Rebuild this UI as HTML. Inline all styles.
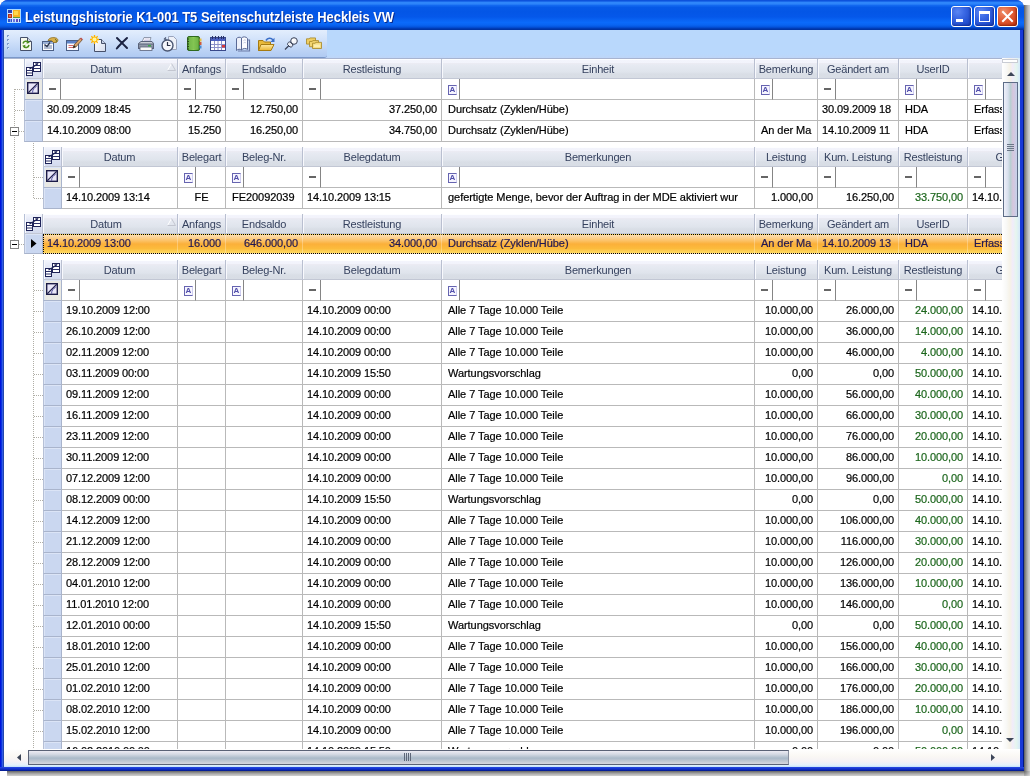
<!DOCTYPE html>
<html><head><meta charset="utf-8"><title>Leistungshistorie</title>
<style>
*{box-sizing:border-box;margin:0;padding:0}
html,body{width:1030px;height:776px;overflow:hidden;background:#fff}
body{font-family:"Liberation Sans",sans-serif;font-size:11px;color:#000;position:relative;will-change:transform}
.abs{position:absolute}
#shadowR{left:1024px;top:5px;width:6px;height:771px;background:linear-gradient(to right,#5c5c5c 0,#868686 25%,#a9a9a9 50%,#c4c4c4 75%,#d6d6d6 100%)}
#shadowB{left:7px;top:771px;width:1017px;height:5px;background:linear-gradient(to bottom,#666 0,#8c8c8c 30%,#b0b0b0 60%,#d0d0d0 100%)}
#shadowC{left:1024px;top:771px;width:6px;height:5px;background:radial-gradient(circle at 0 0,#666 0,#999 40%,#c8c8c8 80%,#dadada 100%)}
#botb{left:0;top:767px;width:1024px;height:4px;background:linear-gradient(to bottom,#2a4be0 0,#1838d8 30%,#0c28b8 70%,#001880 100%)}
#win{left:0;top:0;width:1024px;height:771px;background:linear-gradient(to right,#0014dc 0,#0014dc 1px,#0a34e0 1px,#0a34e0 2px,#3359e3 2px,#3359e3 3px,#2349ae 3px,#2349ae 4px,#1a3ad6 4px,#1a3ad6 1020px,#1838d8 1020px,#1838d8 1023px,#001880 1023px);border-radius:8px 8px 0 0;overflow:hidden}
#title{left:0;top:0;width:1024px;height:30px;background:linear-gradient(to bottom,#0a4bd6 0,#1059e2 1px,#2f86fa 2.5px,#2d84fa 4px,#1268f0 5.5px,#0659e7 7.5px,#0456e6 12px,#0558ea 17px,#0963f3 20px,#0b6afa 22.5px,#0964f2 25px,#0453dc 27px,#003cb6 28.5px,#002e9a 30px)}
#ttext{left:25px;top:9px;font-weight:bold;font-size:14.5px;line-height:16px;color:#fff;white-space:nowrap;text-shadow:1px 1px 0 #0a2a8c;transform:scaleX(0.891);transform-origin:0 0}
.wb{width:21px;height:21px;border:1px solid #fff;border-radius:3px;background:radial-gradient(circle at 30% 25%,#5b86f3 0,#3a68e4 35%,#2450cf 70%,#1a3fb8 100%);box-shadow:inset -1px -1px 2px rgba(10,30,120,.6)}
.wbx{background:radial-gradient(circle at 30% 25%,#f0906c 0,#e2603a 40%,#cf431c 75%,#b0300f 100%);box-shadow:inset -1px -1px 2px rgba(110,20,0,.6)}
#client{left:4px;top:30px;width:1016px;height:737px;background:#fff;overflow:hidden}
#tbar{left:0;top:0;width:1016px;height:28px;background:linear-gradient(to bottom,#b9d8fc 0,#b9d8fc 24px,#bed5f7 28px)}
#tstrip{left:0;top:0;width:323px;height:28px;background:linear-gradient(to bottom,#e3eefd 0,#d0e1fa 40%,#bcd3f5 75%,#b0caf2 100%);border-bottom:1px solid #7b98c9;border-radius:0 0 3px 0}
.cell{-webkit-text-stroke:0.2px currentColor;position:absolute;white-space:nowrap;overflow:hidden;border-right:1px solid #b9b9b9;border-bottom:1px solid #b9b9b9;background:#fff;padding:0 4px 0 4px;line-height:20px}
.t{padding-left:6px;letter-spacing:-0.05px}
.t1{padding-left:4px}
.ls{letter-spacing:-0.11px}
.hd{letter-spacing:-0.18px;position:absolute;white-space:nowrap;overflow:hidden;text-align:center;color:#35415e;line-height:21px;border-right:1px solid #b9bfd0;border-bottom:1px solid #c2c7d4;background:linear-gradient(to bottom,#fdfeff 0,#fdfeff 1px,#f3f4fc 1px,#f2f3fb 4px,#ebebf3 4.5px,#e7eaf2 6px,#dfe4ec 13px,#d9dee6 15px,#d8dde5 19px);box-shadow:inset 1px 0 0 #f8f9fd}
.rs{position:absolute;background:#cad7f0;border-left:1px solid #b6c0d6;border-right:1px solid #a9b4cc;border-bottom:1px solid #a9b4cc;box-shadow:inset 1px 1px 0 #dbe4f6}
.hds{background:linear-gradient(to bottom,#f4f6fd 0,#e6eaf7 30%,#d3daee 100%)!important;border-left:1px solid #b6c0d6}
.r{text-align:right}
.c{text-align:center}
.g{color:#1c661c}
.fop{position:absolute;background:#fff;border-right:1px solid #858585;border-bottom:1px solid #b9b9b9}
.fin{position:absolute;background:#fff;border-right:1px solid #b9b9b9;border-bottom:1px solid #b9b9b9}
.dash{position:absolute;left:6px;top:9px;width:7px;height:2px;background:#666}
.abox{position:absolute;left:6px;top:6px;width:9px;height:10px;border:1px solid #6664b0;border-right-color:#cfcef0;background:#f6f5ff;color:#504eaa;font-size:8px;line-height:8px;text-align:center;font-weight:bold;overflow:hidden}
.sel{background:transparent!important;border-color:transparent!important;border-right-color:rgba(255,255,255,.28)!important;color:#221850;z-index:3}
#selbg{position:absolute;z-index:2;border:1px dotted #000;background:linear-gradient(to bottom,#fcdfb4 0,#fcc877 25%,#fbb03a 50%,#fcbb3c 75%,#fdda62 100%)}
.dotv{position:absolute;width:1px;background-image:linear-gradient(to bottom,#b0aea6 50%,transparent 50%);background-size:1px 2px}
.doth{position:absolute;height:1px;background-image:linear-gradient(to right,#b0aea6 50%,transparent 50%);background-size:2px 1px}
.pm{position:absolute;width:9px;height:9px;border:1px solid #848484;background:#fff}
.pm i{position:absolute;left:1px;top:3px;width:5px;height:1px;background:#000}
</style></head>
<body>
<div class="abs" id="shadowR"></div><div class="abs" id="shadowB"></div><div class="abs" id="shadowC"></div>
<div class="abs" id="win">
<div class="abs" id="title"></div>
<svg class="abs" style="left:7px;top:9px" width="14" height="14" viewBox="0 0 14 14"><rect x="0" y="0" width="14" height="14" fill="#a9d8ff"/><rect x="1" y="1" width="12" height="12" fill="#dbe9ff"/><rect x="1" y="1" width="4" height="3" fill="#2a3fb0"/><rect x="1" y="5" width="4" height="4" fill="#b0301a"/><rect x="2" y="6" width="2" height="2" fill="#e07048"/><rect x="1" y="10" width="2" height="3" fill="#2a4fd0"/><rect x="3.5" y="10" width="1.5" height="3" fill="#2a4fd0"/><rect x="6" y="1" width="7" height="7" fill="#f7b322"/><rect x="7" y="2" width="4" height="4" fill="#ffd84a"/><rect x="6" y="8" width="7" height="1" fill="#5a9a3a"/><rect x="6" y="10" width="2" height="3" fill="#6a7ae0"/><rect x="9" y="10" width="2" height="3" fill="#5a4ac0"/><rect x="12" y="10" width="1" height="3" fill="#2a3fb0"/></svg>
<div class="abs" id="ttext">Leistungshistorie K1-001 T5 Seitenschutzleiste Heckleis VW</div>
<div class="abs wb" style="left:951px;top:6px"><span class="abs" style="left:4px;top:12px;width:7px;height:3px;background:#fff"></span></div>
<div class="abs wb" style="left:974px;top:6px"><span class="abs" style="left:4px;top:4px;width:11px;height:11px;border:1px solid #fff;border-top-width:3px"></span></div>
<div class="abs wb wbx" style="left:997px;top:6px"><svg class="abs" style="left:0;top:0" width="19" height="19" viewBox="0 0 19 19"><path d="M5 5 L14 14 M14 5 L5 14" stroke="#fff" stroke-width="2" stroke-linecap="square" fill="none"/></svg></div>
<div class="abs" id="client">
<div class="abs" id="tbar"><div class="abs" id="tstrip"></div><svg class="abs" style="left:0;top:0" width="330" height="28" viewBox="0 0 330 28">
<defs>
<linearGradient id="gFold" x1="0" y1="0" x2="0" y2="1"><stop offset="0" stop-color="#ffe9a0"/><stop offset="1" stop-color="#e9b534"/></linearGradient>
<linearGradient id="gGreen" x1="0" y1="0" x2="1" y2="0"><stop offset="0" stop-color="#5aa03a"/><stop offset=".5" stop-color="#8fce5a"/><stop offset="1" stop-color="#4f9430"/></linearGradient>
<linearGradient id="gPage" x1="0" y1="0" x2="1" y2="1"><stop offset="0" stop-color="#ffffff"/><stop offset="1" stop-color="#d5dcee"/></linearGradient>
</defs>
<!-- grip -->
<g fill="#7f9acb"><rect x="3" y="5" width="2" height="2"/><rect x="3" y="9" width="2" height="2"/><rect x="3" y="13" width="2" height="2"/><rect x="3" y="17" width="2" height="2"/></g>
<g fill="#fff" opacity=".8"><rect x="4" y="6" width="1" height="1"/><rect x="4" y="10" width="1" height="1"/><rect x="4" y="14" width="1" height="1"/><rect x="4" y="18" width="1" height="1"/></g>
<!-- 1 refresh doc -->
<g transform="translate(16,7)"><path d="M.5 .5H7.5L11.5 4.5V13.5H.5Z" fill="#f7f9ee" stroke="#46506a"/><path d="M7.5 .5V4.5H11.5" fill="#cfd6e2" stroke="#46506a"/><path d="M3 6.5A3 3 0 0 1 8.2 5.3" fill="none" stroke="#4f8f1f" stroke-width="1.5"/><path d="M9 8A3 3 0 0 1 3.6 9.2" fill="none" stroke="#4f8f1f" stroke-width="1.5"/><path d="M7 3.5L9.8 5.8L6.6 6.8Z" fill="#4f8f1f"/><path d="M5 11L2.2 8.8L5.4 7.8Z" fill="#4f8f1f"/></g>
<!-- 2 form with hand -->
<g transform="translate(38,7)"><rect x=".5" y="4.500" width="11" height="9" fill="#fdfdfd" stroke="#4b5f86"/><rect x="1" y="5" width="10" height="2" fill="#9db3d8"/><path d="M2 9H10M2 11H10" stroke="#6a7fa8"/><path d="M2.500 7.500L5 9.500L8 5.500" fill="none" stroke="#2b3550" stroke-width="1.300"/><path d="M6 3.500C7 .8 11 -.2 14.500 1.200C16.500 2.200 16 4.500 14.500 5.500L11.500 5.500L9.500 3.500Z" fill="#d9b04a" stroke="#8a6a1c" stroke-width=".8"/><path d="M13 2.500c1.500 0 2 1.500 1 2.500" fill="none" stroke="#5a6a2a"/></g>
<!-- 3 edit form with pencil -->
<g transform="translate(62,7)"><rect x=".5" y="3.500" width="12" height="10" fill="#fbfbfe" stroke="#4b5f86"/><rect x="1" y="4" width="11" height="2.500" fill="#5d83c8"/><path d="M2.500 8.500H7M2.500 10.500H7" stroke="#d86a6a" stroke-width="1.200"/><path d="M7 11L8 8L14.500 1L16.300 2.800L9.800 10Z" fill="#d8a46a" stroke="#6a4a2a" stroke-width=".8"/><path d="M7 11L8 8L9.800 10Z" fill="#2a2a2a"/><path d="M14.500 1L16.300 2.800" stroke="#c05050" stroke-width="1.500"/></g>
<!-- 4 new doc with star -->
<g transform="translate(86,5)"><path d="M4.500 4.500H11.500L15.500 8.500V16.500H4.500Z" fill="url(#gPage)" stroke="#46506a"/><path d="M11.500 4.500V8.500H15.500" fill="#c8d2e8" stroke="#46506a"/><circle cx="4.500" cy="4.500" r="3" fill="#ffd42a"/><path d="M4.500 0V9M0 4.500H9M1.300 1.300L7.700 7.700M7.700 1.300L1.300 7.700" stroke="#ffb400" stroke-width="1.300"/><circle cx="4.500" cy="4.500" r="2" fill="#fff3a0"/></g>
<!-- 5 delete X -->
<g transform="translate(112,7)"><path d="M1 1C3.500 3.500 8 8 11 11M11 1C8 4 3.500 8 .8 11.500" fill="none" stroke="#1c2342" stroke-width="2" stroke-linecap="round"/></g>
<!-- 6 printer -->
<g transform="translate(134,7)"><path d="M4 5L6 .5H13L11.500 5Z" fill="#fdfdfd" stroke="#7a8498" stroke-width=".8"/><path d="M6.500 2H11.500M6 3.500H11" stroke="#b8b0d8" stroke-width=".7"/><path d="M.5 6.500L3 4.500H14L15.500 6.500V11.500H.5Z" fill="#c9ced8" stroke="#59627a"/><rect x=".5" y="7" width="15" height="4.500" fill="#8f97a8" stroke="#59627a"/><rect x="2" y="10" width="12" height="3.500" fill="#fafafa" stroke="#59627a" stroke-width=".8"/><rect x="10" y="8" width="3" height="1.500" fill="#3fa84a"/></g>
<!-- 7 clock with page -->
<g transform="translate(157,6)"><path d="M7.500 .5H12.500L15.500 3.500V13.500H7.500Z" fill="#eef1f8" stroke="#9aa4bc"/><circle cx="6.500" cy="9.500" r="5.500" fill="#f4f6fb" stroke="#4a5672" stroke-width="1.400"/><path d="M6.500 6V9.500H9.500" fill="none" stroke="#2a3248" stroke-width="1.200"/><path d="M3 3.500L5 1.500M4 2.500L5.500 4" stroke="#4a5672" stroke-width="1.200"/></g>
<!-- 8 green notebook -->
<g transform="translate(182,6)"><rect x="1.500" y=".5" width="12" height="14" rx="1.500" fill="url(#gGreen)" stroke="#2f6a1e"/><rect x="3" y="2" width="9" height="11" fill="#7cc04e" opacity=".6"/><path d="M1 3H3M1 5.500H3M1 8H3M1 10.500H3M1 13H3" stroke="#2a4a1a" stroke-width="1"/><rect x="13.500" y="2.500" width="2" height="3" fill="#e8c040"/><rect x="13.500" y="6" width="2" height="3" fill="#d05a3a"/><rect x="13.500" y="9.500" width="2" height="3" fill="#4a8ad0"/></g>
<!-- 9 calendar -->
<g transform="translate(206,6)"><rect x=".5" y="1.500" width="15" height="13" fill="#fdfdff" stroke="#39498a"/><rect x="1" y="2" width="14" height="3" fill="#4a5fc0"/><path d="M2.500 0V3M5.500 0V3M8.500 0V3M11.500 0V3M13.500 0V3" stroke="#27306a" stroke-width="1"/><path d="M1 8.500H15M1 11.500H15M4.500 5V14M8 5V14M11.500 5V14" stroke="#8a8fc8" stroke-width="1"/><rect x="12" y="9" width="3" height="2.500" fill="#d83a3a"/></g>
<!-- 10 book/pages -->
<g transform="translate(231,6)"><path d="M1.500 2.500C3 1 5 .8 6.500 2V14C5 12.800 3 13 1.500 14.500Z" fill="#eef1fa" stroke="#5a6a96"/><path d="M6.500 2C8 .3 11 .5 12.500 2.500V13.500C11 12 8 12 6.500 14Z" fill="#fbfcff" stroke="#5a6a96"/><path d="M12.500 4H14.500V15H3" fill="none" stroke="#6b7aa6" stroke-width="1.200"/><path d="M8.500 4.500C9.500 3.500 10.500 4 11 4.500M8.500 7C9.500 6 10.500 6.500 11 7" stroke="#b0bad8" stroke-width=".8" fill="none"/></g>
<!-- 11 open folder with arrow -->
<g transform="translate(254,7)"><path d="M.5 13.500V3.500H5L6.500 5H12.500V13.500Z" fill="#e8b93a" stroke="#a67b12"/><path d="M.5 13.500L3 7.500H16L13 13.500Z" fill="url(#gFold)" stroke="#a67b12"/><path d="M8 3.500C9.500 .8 13 .5 15 3" fill="none" stroke="#3b6fc8" stroke-width="1.600"/><path d="M16.500 .8V5H12.300Z" fill="#3b6fc8"/></g>
<!-- 12 pin -->
<g transform="translate(280,7)"><path d="M1 12.500L5 8.500" stroke="#3a4258" stroke-width="1.300"/><path d="M3.500 7.500C3.500 5.500 5.500 4 7 5.500L8.500 7C9.500 8.500 8 10.500 6 10Z" fill="#e9ecf4" stroke="#3a4258"/><circle cx="10" cy="4" r="3.300" fill="#f3f5fa" stroke="#3a4258"/><path d="M6.500 5L8.800 7.500" stroke="#3a4258"/><circle cx="9.200" cy="3.200" r="1.200" fill="#fff"/></g>
<!-- 13 stacked folders -->
<g transform="translate(302,7.500) scale(1,.88)"><path d="M.5 7.500V1.500H3L4 .5H9.500V7.500Z" fill="#f0ce62" stroke="#a98a2a" stroke-width=".9"/><path d="M3.500 10.500V4.500H6L7 3.500H12.500V10.500Z" fill="#f3d570" stroke="#a98a2a" stroke-width=".9"/><path d="M6.500 12.500V6.500H9L10 5.500H15.500V12.500Z" fill="#f6dc80" stroke="#a98a2a" stroke-width=".9"/><rect x="8" y="8" width="6" height="3" fill="#fbeeb0"/></g>
</svg></div>
<div class="abs" id="grid" style="left:0;top:28px;width:998px;height:691px;overflow:hidden;background:#fff">
<div class="hd hds" style="left:20px;top:1px;width:19px;height:20px"><svg style="position:absolute;left:1px;top:2px" width="16" height="16" viewBox="0 0 16 16"><rect x="7.500" y="1.500" width="7" height="9" fill="#fff" stroke="#1f2458" stroke-width="1"/><path d="M8 4.500H14M8 7.500H14" stroke="#2a3068"/><rect x=".5" y="6.500" width="6" height="8" fill="#fff" stroke="#1f2458"/><path d="M1 9.500H6M1 12H6" stroke="#2a3068"/><path d="M3.500 8L11 3.500" stroke="#1f2458" stroke-width="1.200"/><path d="M12.500 2L9 2.500L11 5Z" fill="#1f2458"/></svg></div>
<div class="hd" style="left:39px;top:1px;width:135px;height:20px;padding-right:8px">Datum<svg style="position:absolute;right:1px;top:4px" width="9" height="8" viewBox="0 0 9 8"><path d="M.5 7.500L4.500 .5" stroke="#fff" stroke-width="1" fill="none"/><path d="M4.500 .5L8.500 7.500H.5" stroke="#c3c6d0" stroke-width="1" fill="none"/></svg></div>
<div class="hd" style="left:174px;top:1px;width:48px;height:20px">Anfangs</div>
<div class="hd" style="left:222px;top:1px;width:77px;height:20px">Endsaldo</div>
<div class="hd" style="left:299px;top:1px;width:139px;height:20px">Restleistung</div>
<div class="hd" style="left:438px;top:1px;width:313px;height:20px">Einheit</div>
<div class="hd" style="left:751px;top:1px;width:63px;height:20px">Bemerkung</div>
<div class="hd" style="left:814px;top:1px;width:81px;height:20px">Geändert am</div>
<div class="hd" style="left:895px;top:1px;width:69px;height:20px">UserID</div>
<div class="hd" style="left:964px;top:1px;width:72px;height:20px"></div>
<div class="rs" style="left:20px;top:21px;width:19px;height:21px;background:#e9e9e4"><svg style="position:absolute;left:2px;top:3px" width="12" height="12" viewBox="0 0 13 13"><rect x=".75" y=".75" width="11.500" height="11.500" fill="#e8e6f8" stroke="#1c1c48" stroke-width="1.500"/><path d="M1.500 11.500L11.500 1.500" stroke="#1c1c48" stroke-width="1.400"/><path d="M6 11.500C6 8 8 6 10.500 4.500" fill="none" stroke="#4a489a" stroke-width="1"/></svg></div>
<div class="fop" style="left:39px;top:21px;width:18px;height:21px"><span class="dash"></span></div><div class="fin" style="left:57px;top:21px;width:117px;height:21px"></div>
<div class="fop" style="left:174px;top:21px;width:18px;height:21px"><span class="dash"></span></div><div class="fin" style="left:192px;top:21px;width:30px;height:21px"></div>
<div class="fop" style="left:222px;top:21px;width:18px;height:21px"><span class="dash"></span></div><div class="fin" style="left:240px;top:21px;width:59px;height:21px"></div>
<div class="fop" style="left:299px;top:21px;width:18px;height:21px"><span class="dash"></span></div><div class="fin" style="left:317px;top:21px;width:121px;height:21px"></div>
<div class="fop" style="left:438px;top:21px;width:18px;height:21px"><span class="abox">A</span></div><div class="fin" style="left:456px;top:21px;width:295px;height:21px"></div>
<div class="fop" style="left:751px;top:21px;width:18px;height:21px"><span class="abox">A</span></div><div class="fin" style="left:769px;top:21px;width:45px;height:21px"></div>
<div class="fop" style="left:814px;top:21px;width:18px;height:21px"><span class="dash"></span></div><div class="fin" style="left:832px;top:21px;width:63px;height:21px"></div>
<div class="fop" style="left:895px;top:21px;width:18px;height:21px"><span class="abox">A</span></div><div class="fin" style="left:913px;top:21px;width:51px;height:21px"></div>
<div class="fop" style="left:964px;top:21px;width:18px;height:21px"><span class="abox">A</span></div><div class="fin" style="left:982px;top:21px;width:54px;height:21px"></div>
<div class="rs" style="left:20px;top:42px;width:19px;height:21px"></div>
<div class="cell t1 ls" style="left:39px;top:42px;width:135px;height:21px;line-height:18px">30.09.2009 18:45</div>
<div class="cell r ls" style="left:174px;top:42px;width:48px;height:21px;line-height:18px">12.750</div>
<div class="cell r ls" style="left:222px;top:42px;width:77px;height:21px;line-height:18px">12.750,00</div>
<div class="cell r ls" style="left:299px;top:42px;width:139px;height:21px;line-height:18px">37.250,00</div>
<div class="cell t" style="left:438px;top:42px;width:313px;height:21px;line-height:18px">Durchsatz (Zyklen/Hübe)</div>
<div class="cell t" style="left:751px;top:42px;width:63px;height:21px;line-height:18px"></div>
<div class="cell ls" style="left:814px;top:42px;width:81px;height:21px;line-height:18px">30.09.2009 18</div>
<div class="cell t" style="left:895px;top:42px;width:69px;height:21px;line-height:18px">HDA</div>
<div class="cell t" style="left:964px;top:42px;width:72px;height:21px;line-height:18px">Erfass</div>
<div class="rs" style="left:20px;top:63px;width:19px;height:21px"></div>
<div class="cell t1 ls" style="left:39px;top:63px;width:135px;height:21px;line-height:18px">14.10.2009 08:00</div>
<div class="cell r ls" style="left:174px;top:63px;width:48px;height:21px;line-height:18px">15.250</div>
<div class="cell r ls" style="left:222px;top:63px;width:77px;height:21px;line-height:18px">16.250,00</div>
<div class="cell r ls" style="left:299px;top:63px;width:139px;height:21px;line-height:18px">34.750,00</div>
<div class="cell t" style="left:438px;top:63px;width:313px;height:21px;line-height:18px">Durchsatz (Zyklen/Hübe)</div>
<div class="cell t" style="left:751px;top:63px;width:63px;height:21px;line-height:18px">An der Ma</div>
<div class="cell ls" style="left:814px;top:63px;width:81px;height:21px;line-height:18px">14.10.2009 11</div>
<div class="cell t" style="left:895px;top:63px;width:69px;height:21px;line-height:18px">HDA</div>
<div class="cell t" style="left:964px;top:63px;width:72px;height:21px;line-height:18px">Erfass</div>
<div class="hd hds" style="left:39px;top:89px;width:19px;height:20px"><svg style="position:absolute;left:1px;top:2px" width="16" height="16" viewBox="0 0 16 16"><rect x="7.500" y="1.500" width="7" height="9" fill="#fff" stroke="#1f2458" stroke-width="1"/><path d="M8 4.500H14M8 7.500H14" stroke="#2a3068"/><rect x=".5" y="6.500" width="6" height="8" fill="#fff" stroke="#1f2458"/><path d="M1 9.500H6M1 12H6" stroke="#2a3068"/><path d="M3.500 8L11 3.500" stroke="#1f2458" stroke-width="1.200"/><path d="M12.500 2L9 2.500L11 5Z" fill="#1f2458"/></svg></div>
<div class="hd" style="left:58px;top:89px;width:116px;height:20px">Datum</div>
<div class="hd" style="left:174px;top:89px;width:48px;height:20px">Belegart</div>
<div class="hd" style="left:222px;top:89px;width:77px;height:20px">Beleg-Nr.</div>
<div class="hd" style="left:299px;top:89px;width:139px;height:20px">Belegdatum</div>
<div class="hd" style="left:438px;top:89px;width:313px;height:20px">Bemerkungen</div>
<div class="hd" style="left:751px;top:89px;width:63px;height:20px">Leistung</div>
<div class="hd" style="left:814px;top:89px;width:81px;height:20px">Kum. Leistung</div>
<div class="hd" style="left:895px;top:89px;width:69px;height:20px">Restleistung</div>
<div class="hd" style="left:964px;top:89px;width:118px;height:20px">Geändert am</div>
<div class="rs" style="left:39px;top:109px;width:19px;height:21px;background:#e9e9e4"><svg style="position:absolute;left:2px;top:3px" width="12" height="12" viewBox="0 0 13 13"><rect x=".75" y=".75" width="11.500" height="11.500" fill="#e8e6f8" stroke="#1c1c48" stroke-width="1.500"/><path d="M1.500 11.500L11.500 1.500" stroke="#1c1c48" stroke-width="1.400"/><path d="M6 11.500C6 8 8 6 10.500 4.500" fill="none" stroke="#4a489a" stroke-width="1"/></svg></div>
<div class="fop" style="left:58px;top:109px;width:18px;height:21px"><span class="dash"></span></div><div class="fin" style="left:76px;top:109px;width:98px;height:21px"></div>
<div class="fop" style="left:174px;top:109px;width:18px;height:21px"><span class="abox">A</span></div><div class="fin" style="left:192px;top:109px;width:30px;height:21px"></div>
<div class="fop" style="left:222px;top:109px;width:18px;height:21px"><span class="abox">A</span></div><div class="fin" style="left:240px;top:109px;width:59px;height:21px"></div>
<div class="fop" style="left:299px;top:109px;width:18px;height:21px"><span class="dash"></span></div><div class="fin" style="left:317px;top:109px;width:121px;height:21px"></div>
<div class="fop" style="left:438px;top:109px;width:18px;height:21px"><span class="abox">A</span></div><div class="fin" style="left:456px;top:109px;width:295px;height:21px"></div>
<div class="fop" style="left:751px;top:109px;width:18px;height:21px"><span class="dash"></span></div><div class="fin" style="left:769px;top:109px;width:45px;height:21px"></div>
<div class="fop" style="left:814px;top:109px;width:18px;height:21px"><span class="dash"></span></div><div class="fin" style="left:832px;top:109px;width:63px;height:21px"></div>
<div class="fop" style="left:895px;top:109px;width:18px;height:21px"><span class="dash"></span></div><div class="fin" style="left:913px;top:109px;width:51px;height:21px"></div>
<div class="fop" style="left:964px;top:109px;width:18px;height:21px"><span class="dash"></span></div><div class="fin" style="left:982px;top:109px;width:100px;height:21px"></div>
<div class="rs" style="left:39px;top:130px;width:19px;height:21px"></div>
<div class="cell t1 ls" style="left:58px;top:130px;width:116px;height:21px;line-height:18px">14.10.2009 13:14</div>
<div class="cell c" style="left:174px;top:130px;width:48px;height:21px;line-height:18px">FE</div>
<div class="cell t" style="left:222px;top:130px;width:77px;height:21px;line-height:18px">FE20092039</div>
<div class="cell ls" style="left:299px;top:130px;width:139px;height:21px;line-height:18px">14.10.2009 13:15</div>
<div class="cell t" style="left:438px;top:130px;width:313px;height:21px;line-height:18px">gefertigte Menge, bevor der Auftrag in der MDE aktiviert wur</div>
<div class="cell r ls" style="left:751px;top:130px;width:63px;height:21px;line-height:18px">1.000,00</div>
<div class="cell r ls" style="left:814px;top:130px;width:81px;height:21px;line-height:18px">16.250,00</div>
<div class="cell r g ls" style="left:895px;top:130px;width:69px;height:21px;line-height:18px">33.750,00</div>
<div class="cell t1 ls" style="left:964px;top:130px;width:118px;height:21px;line-height:18px">14.10.</div>
<div class="hd hds" style="left:20px;top:156px;width:19px;height:20px"><svg style="position:absolute;left:1px;top:2px" width="16" height="16" viewBox="0 0 16 16"><rect x="7.500" y="1.500" width="7" height="9" fill="#fff" stroke="#1f2458" stroke-width="1"/><path d="M8 4.500H14M8 7.500H14" stroke="#2a3068"/><rect x=".5" y="6.500" width="6" height="8" fill="#fff" stroke="#1f2458"/><path d="M1 9.500H6M1 12H6" stroke="#2a3068"/><path d="M3.500 8L11 3.500" stroke="#1f2458" stroke-width="1.200"/><path d="M12.500 2L9 2.500L11 5Z" fill="#1f2458"/></svg></div>
<div class="hd" style="left:39px;top:156px;width:135px;height:20px;padding-right:8px">Datum<svg style="position:absolute;right:1px;top:4px" width="9" height="8" viewBox="0 0 9 8"><path d="M.5 7.500L4.500 .5" stroke="#fff" stroke-width="1" fill="none"/><path d="M4.500 .5L8.500 7.500H.5" stroke="#c3c6d0" stroke-width="1" fill="none"/></svg></div>
<div class="hd" style="left:174px;top:156px;width:48px;height:20px">Anfangs</div>
<div class="hd" style="left:222px;top:156px;width:77px;height:20px">Endsaldo</div>
<div class="hd" style="left:299px;top:156px;width:139px;height:20px">Restleistung</div>
<div class="hd" style="left:438px;top:156px;width:313px;height:20px">Einheit</div>
<div class="hd" style="left:751px;top:156px;width:63px;height:20px">Bemerkung</div>
<div class="hd" style="left:814px;top:156px;width:81px;height:20px">Geändert am</div>
<div class="hd" style="left:895px;top:156px;width:69px;height:20px">UserID</div>
<div class="hd" style="left:964px;top:156px;width:72px;height:20px"></div>
<div id="selbg" style="left:39px;top:176px;width:967px;height:20px"></div>
<div class="rs" style="left:20px;top:176px;width:19px;height:20px"><svg style="position:absolute;left:6px;top:5px" width="6" height="9" viewBox="0 0 6 9"><path d="M0 0L5.500 4.500L0 9Z" fill="#000"/></svg></div>
<div class="cell t1 ls sel" style="left:39px;top:176px;width:135px;height:20px;line-height:18px">14.10.2009 13:00</div>
<div class="cell r ls sel" style="left:174px;top:176px;width:48px;height:20px;line-height:18px">16.000</div>
<div class="cell r ls sel" style="left:222px;top:176px;width:77px;height:20px;line-height:18px">646.000,00</div>
<div class="cell r ls sel" style="left:299px;top:176px;width:139px;height:20px;line-height:18px">34.000,00</div>
<div class="cell t sel" style="left:438px;top:176px;width:313px;height:20px;line-height:18px">Durchsatz (Zyklen/Hübe)</div>
<div class="cell t sel" style="left:751px;top:176px;width:63px;height:20px;line-height:18px">An der Ma</div>
<div class="cell ls sel" style="left:814px;top:176px;width:81px;height:20px;line-height:18px">14.10.2009 13</div>
<div class="cell t sel" style="left:895px;top:176px;width:69px;height:20px;line-height:18px">HDA</div>
<div class="cell t sel" style="left:964px;top:176px;width:72px;height:20px;line-height:18px">Erfass</div>
<div class="hd hds" style="left:39px;top:202px;width:19px;height:20px"><svg style="position:absolute;left:1px;top:2px" width="16" height="16" viewBox="0 0 16 16"><rect x="7.500" y="1.500" width="7" height="9" fill="#fff" stroke="#1f2458" stroke-width="1"/><path d="M8 4.500H14M8 7.500H14" stroke="#2a3068"/><rect x=".5" y="6.500" width="6" height="8" fill="#fff" stroke="#1f2458"/><path d="M1 9.500H6M1 12H6" stroke="#2a3068"/><path d="M3.500 8L11 3.500" stroke="#1f2458" stroke-width="1.200"/><path d="M12.500 2L9 2.500L11 5Z" fill="#1f2458"/></svg></div>
<div class="hd" style="left:58px;top:202px;width:116px;height:20px">Datum</div>
<div class="hd" style="left:174px;top:202px;width:48px;height:20px">Belegart</div>
<div class="hd" style="left:222px;top:202px;width:77px;height:20px">Beleg-Nr.</div>
<div class="hd" style="left:299px;top:202px;width:139px;height:20px">Belegdatum</div>
<div class="hd" style="left:438px;top:202px;width:313px;height:20px">Bemerkungen</div>
<div class="hd" style="left:751px;top:202px;width:63px;height:20px">Leistung</div>
<div class="hd" style="left:814px;top:202px;width:81px;height:20px">Kum. Leistung</div>
<div class="hd" style="left:895px;top:202px;width:69px;height:20px">Restleistung</div>
<div class="hd" style="left:964px;top:202px;width:118px;height:20px">Geändert am</div>
<div class="rs" style="left:39px;top:222px;width:19px;height:21px;background:#e9e9e4"><svg style="position:absolute;left:2px;top:3px" width="12" height="12" viewBox="0 0 13 13"><rect x=".75" y=".75" width="11.500" height="11.500" fill="#e8e6f8" stroke="#1c1c48" stroke-width="1.500"/><path d="M1.500 11.500L11.500 1.500" stroke="#1c1c48" stroke-width="1.400"/><path d="M6 11.500C6 8 8 6 10.500 4.500" fill="none" stroke="#4a489a" stroke-width="1"/></svg></div>
<div class="fop" style="left:58px;top:222px;width:18px;height:21px"><span class="dash"></span></div><div class="fin" style="left:76px;top:222px;width:98px;height:21px"></div>
<div class="fop" style="left:174px;top:222px;width:18px;height:21px"><span class="abox">A</span></div><div class="fin" style="left:192px;top:222px;width:30px;height:21px"></div>
<div class="fop" style="left:222px;top:222px;width:18px;height:21px"><span class="abox">A</span></div><div class="fin" style="left:240px;top:222px;width:59px;height:21px"></div>
<div class="fop" style="left:299px;top:222px;width:18px;height:21px"><span class="dash"></span></div><div class="fin" style="left:317px;top:222px;width:121px;height:21px"></div>
<div class="fop" style="left:438px;top:222px;width:18px;height:21px"><span class="abox">A</span></div><div class="fin" style="left:456px;top:222px;width:295px;height:21px"></div>
<div class="fop" style="left:751px;top:222px;width:18px;height:21px"><span class="dash"></span></div><div class="fin" style="left:769px;top:222px;width:45px;height:21px"></div>
<div class="fop" style="left:814px;top:222px;width:18px;height:21px"><span class="dash"></span></div><div class="fin" style="left:832px;top:222px;width:63px;height:21px"></div>
<div class="fop" style="left:895px;top:222px;width:18px;height:21px"><span class="dash"></span></div><div class="fin" style="left:913px;top:222px;width:51px;height:21px"></div>
<div class="fop" style="left:964px;top:222px;width:18px;height:21px"><span class="dash"></span></div><div class="fin" style="left:982px;top:222px;width:100px;height:21px"></div>
<div class="rs" style="left:39px;top:243px;width:19px;height:21px"></div>
<div class="cell t1 ls" style="left:58px;top:243px;width:116px;height:21px;line-height:18px">19.10.2009 12:00</div>
<div class="cell" style="left:174px;top:243px;width:48px;height:21px;line-height:18px"></div>
<div class="cell t" style="left:222px;top:243px;width:77px;height:21px;line-height:18px"></div>
<div class="cell ls" style="left:299px;top:243px;width:139px;height:21px;line-height:18px">14.10.2009 00:00</div>
<div class="cell t" style="left:438px;top:243px;width:313px;height:21px;line-height:18px">Alle 7 Tage 10.000 Teile</div>
<div class="cell r ls" style="left:751px;top:243px;width:63px;height:21px;line-height:18px">10.000,00</div>
<div class="cell r ls" style="left:814px;top:243px;width:81px;height:21px;line-height:18px">26.000,00</div>
<div class="cell r g ls" style="left:895px;top:243px;width:69px;height:21px;line-height:18px">24.000,00</div>
<div class="cell t1 ls" style="left:964px;top:243px;width:118px;height:21px;line-height:18px">14.10.</div>
<div class="rs" style="left:39px;top:264px;width:19px;height:21px"></div>
<div class="cell t1 ls" style="left:58px;top:264px;width:116px;height:21px;line-height:18px">26.10.2009 12:00</div>
<div class="cell" style="left:174px;top:264px;width:48px;height:21px;line-height:18px"></div>
<div class="cell t" style="left:222px;top:264px;width:77px;height:21px;line-height:18px"></div>
<div class="cell ls" style="left:299px;top:264px;width:139px;height:21px;line-height:18px">14.10.2009 00:00</div>
<div class="cell t" style="left:438px;top:264px;width:313px;height:21px;line-height:18px">Alle 7 Tage 10.000 Teile</div>
<div class="cell r ls" style="left:751px;top:264px;width:63px;height:21px;line-height:18px">10.000,00</div>
<div class="cell r ls" style="left:814px;top:264px;width:81px;height:21px;line-height:18px">36.000,00</div>
<div class="cell r g ls" style="left:895px;top:264px;width:69px;height:21px;line-height:18px">14.000,00</div>
<div class="cell t1 ls" style="left:964px;top:264px;width:118px;height:21px;line-height:18px">14.10.</div>
<div class="rs" style="left:39px;top:285px;width:19px;height:21px"></div>
<div class="cell t1 ls" style="left:58px;top:285px;width:116px;height:21px;line-height:18px">02.11.2009 12:00</div>
<div class="cell" style="left:174px;top:285px;width:48px;height:21px;line-height:18px"></div>
<div class="cell t" style="left:222px;top:285px;width:77px;height:21px;line-height:18px"></div>
<div class="cell ls" style="left:299px;top:285px;width:139px;height:21px;line-height:18px">14.10.2009 00:00</div>
<div class="cell t" style="left:438px;top:285px;width:313px;height:21px;line-height:18px">Alle 7 Tage 10.000 Teile</div>
<div class="cell r ls" style="left:751px;top:285px;width:63px;height:21px;line-height:18px">10.000,00</div>
<div class="cell r ls" style="left:814px;top:285px;width:81px;height:21px;line-height:18px">46.000,00</div>
<div class="cell r g ls" style="left:895px;top:285px;width:69px;height:21px;line-height:18px">4.000,00</div>
<div class="cell t1 ls" style="left:964px;top:285px;width:118px;height:21px;line-height:18px">14.10.</div>
<div class="rs" style="left:39px;top:306px;width:19px;height:21px"></div>
<div class="cell t1 ls" style="left:58px;top:306px;width:116px;height:21px;line-height:18px">03.11.2009 00:00</div>
<div class="cell" style="left:174px;top:306px;width:48px;height:21px;line-height:18px"></div>
<div class="cell t" style="left:222px;top:306px;width:77px;height:21px;line-height:18px"></div>
<div class="cell ls" style="left:299px;top:306px;width:139px;height:21px;line-height:18px">14.10.2009 15:50</div>
<div class="cell t" style="left:438px;top:306px;width:313px;height:21px;line-height:18px">Wartungsvorschlag</div>
<div class="cell r ls" style="left:751px;top:306px;width:63px;height:21px;line-height:18px">0,00</div>
<div class="cell r ls" style="left:814px;top:306px;width:81px;height:21px;line-height:18px">0,00</div>
<div class="cell r g ls" style="left:895px;top:306px;width:69px;height:21px;line-height:18px">50.000,00</div>
<div class="cell t1 ls" style="left:964px;top:306px;width:118px;height:21px;line-height:18px">14.10.</div>
<div class="rs" style="left:39px;top:327px;width:19px;height:21px"></div>
<div class="cell t1 ls" style="left:58px;top:327px;width:116px;height:21px;line-height:18px">09.11.2009 12:00</div>
<div class="cell" style="left:174px;top:327px;width:48px;height:21px;line-height:18px"></div>
<div class="cell t" style="left:222px;top:327px;width:77px;height:21px;line-height:18px"></div>
<div class="cell ls" style="left:299px;top:327px;width:139px;height:21px;line-height:18px">14.10.2009 00:00</div>
<div class="cell t" style="left:438px;top:327px;width:313px;height:21px;line-height:18px">Alle 7 Tage 10.000 Teile</div>
<div class="cell r ls" style="left:751px;top:327px;width:63px;height:21px;line-height:18px">10.000,00</div>
<div class="cell r ls" style="left:814px;top:327px;width:81px;height:21px;line-height:18px">56.000,00</div>
<div class="cell r g ls" style="left:895px;top:327px;width:69px;height:21px;line-height:18px">40.000,00</div>
<div class="cell t1 ls" style="left:964px;top:327px;width:118px;height:21px;line-height:18px">14.10.</div>
<div class="rs" style="left:39px;top:348px;width:19px;height:21px"></div>
<div class="cell t1 ls" style="left:58px;top:348px;width:116px;height:21px;line-height:18px">16.11.2009 12:00</div>
<div class="cell" style="left:174px;top:348px;width:48px;height:21px;line-height:18px"></div>
<div class="cell t" style="left:222px;top:348px;width:77px;height:21px;line-height:18px"></div>
<div class="cell ls" style="left:299px;top:348px;width:139px;height:21px;line-height:18px">14.10.2009 00:00</div>
<div class="cell t" style="left:438px;top:348px;width:313px;height:21px;line-height:18px">Alle 7 Tage 10.000 Teile</div>
<div class="cell r ls" style="left:751px;top:348px;width:63px;height:21px;line-height:18px">10.000,00</div>
<div class="cell r ls" style="left:814px;top:348px;width:81px;height:21px;line-height:18px">66.000,00</div>
<div class="cell r g ls" style="left:895px;top:348px;width:69px;height:21px;line-height:18px">30.000,00</div>
<div class="cell t1 ls" style="left:964px;top:348px;width:118px;height:21px;line-height:18px">14.10.</div>
<div class="rs" style="left:39px;top:369px;width:19px;height:21px"></div>
<div class="cell t1 ls" style="left:58px;top:369px;width:116px;height:21px;line-height:18px">23.11.2009 12:00</div>
<div class="cell" style="left:174px;top:369px;width:48px;height:21px;line-height:18px"></div>
<div class="cell t" style="left:222px;top:369px;width:77px;height:21px;line-height:18px"></div>
<div class="cell ls" style="left:299px;top:369px;width:139px;height:21px;line-height:18px">14.10.2009 00:00</div>
<div class="cell t" style="left:438px;top:369px;width:313px;height:21px;line-height:18px">Alle 7 Tage 10.000 Teile</div>
<div class="cell r ls" style="left:751px;top:369px;width:63px;height:21px;line-height:18px">10.000,00</div>
<div class="cell r ls" style="left:814px;top:369px;width:81px;height:21px;line-height:18px">76.000,00</div>
<div class="cell r g ls" style="left:895px;top:369px;width:69px;height:21px;line-height:18px">20.000,00</div>
<div class="cell t1 ls" style="left:964px;top:369px;width:118px;height:21px;line-height:18px">14.10.</div>
<div class="rs" style="left:39px;top:390px;width:19px;height:21px"></div>
<div class="cell t1 ls" style="left:58px;top:390px;width:116px;height:21px;line-height:18px">30.11.2009 12:00</div>
<div class="cell" style="left:174px;top:390px;width:48px;height:21px;line-height:18px"></div>
<div class="cell t" style="left:222px;top:390px;width:77px;height:21px;line-height:18px"></div>
<div class="cell ls" style="left:299px;top:390px;width:139px;height:21px;line-height:18px">14.10.2009 00:00</div>
<div class="cell t" style="left:438px;top:390px;width:313px;height:21px;line-height:18px">Alle 7 Tage 10.000 Teile</div>
<div class="cell r ls" style="left:751px;top:390px;width:63px;height:21px;line-height:18px">10.000,00</div>
<div class="cell r ls" style="left:814px;top:390px;width:81px;height:21px;line-height:18px">86.000,00</div>
<div class="cell r g ls" style="left:895px;top:390px;width:69px;height:21px;line-height:18px">10.000,00</div>
<div class="cell t1 ls" style="left:964px;top:390px;width:118px;height:21px;line-height:18px">14.10.</div>
<div class="rs" style="left:39px;top:411px;width:19px;height:21px"></div>
<div class="cell t1 ls" style="left:58px;top:411px;width:116px;height:21px;line-height:18px">07.12.2009 12:00</div>
<div class="cell" style="left:174px;top:411px;width:48px;height:21px;line-height:18px"></div>
<div class="cell t" style="left:222px;top:411px;width:77px;height:21px;line-height:18px"></div>
<div class="cell ls" style="left:299px;top:411px;width:139px;height:21px;line-height:18px">14.10.2009 00:00</div>
<div class="cell t" style="left:438px;top:411px;width:313px;height:21px;line-height:18px">Alle 7 Tage 10.000 Teile</div>
<div class="cell r ls" style="left:751px;top:411px;width:63px;height:21px;line-height:18px">10.000,00</div>
<div class="cell r ls" style="left:814px;top:411px;width:81px;height:21px;line-height:18px">96.000,00</div>
<div class="cell r g ls" style="left:895px;top:411px;width:69px;height:21px;line-height:18px">0,00</div>
<div class="cell t1 ls" style="left:964px;top:411px;width:118px;height:21px;line-height:18px">14.10.</div>
<div class="rs" style="left:39px;top:432px;width:19px;height:21px"></div>
<div class="cell t1 ls" style="left:58px;top:432px;width:116px;height:21px;line-height:18px">08.12.2009 00:00</div>
<div class="cell" style="left:174px;top:432px;width:48px;height:21px;line-height:18px"></div>
<div class="cell t" style="left:222px;top:432px;width:77px;height:21px;line-height:18px"></div>
<div class="cell ls" style="left:299px;top:432px;width:139px;height:21px;line-height:18px">14.10.2009 15:50</div>
<div class="cell t" style="left:438px;top:432px;width:313px;height:21px;line-height:18px">Wartungsvorschlag</div>
<div class="cell r ls" style="left:751px;top:432px;width:63px;height:21px;line-height:18px">0,00</div>
<div class="cell r ls" style="left:814px;top:432px;width:81px;height:21px;line-height:18px">0,00</div>
<div class="cell r g ls" style="left:895px;top:432px;width:69px;height:21px;line-height:18px">50.000,00</div>
<div class="cell t1 ls" style="left:964px;top:432px;width:118px;height:21px;line-height:18px">14.10.</div>
<div class="rs" style="left:39px;top:453px;width:19px;height:21px"></div>
<div class="cell t1 ls" style="left:58px;top:453px;width:116px;height:21px;line-height:18px">14.12.2009 12:00</div>
<div class="cell" style="left:174px;top:453px;width:48px;height:21px;line-height:18px"></div>
<div class="cell t" style="left:222px;top:453px;width:77px;height:21px;line-height:18px"></div>
<div class="cell ls" style="left:299px;top:453px;width:139px;height:21px;line-height:18px">14.10.2009 00:00</div>
<div class="cell t" style="left:438px;top:453px;width:313px;height:21px;line-height:18px">Alle 7 Tage 10.000 Teile</div>
<div class="cell r ls" style="left:751px;top:453px;width:63px;height:21px;line-height:18px">10.000,00</div>
<div class="cell r ls" style="left:814px;top:453px;width:81px;height:21px;line-height:18px">106.000,00</div>
<div class="cell r g ls" style="left:895px;top:453px;width:69px;height:21px;line-height:18px">40.000,00</div>
<div class="cell t1 ls" style="left:964px;top:453px;width:118px;height:21px;line-height:18px">14.10.</div>
<div class="rs" style="left:39px;top:474px;width:19px;height:21px"></div>
<div class="cell t1 ls" style="left:58px;top:474px;width:116px;height:21px;line-height:18px">21.12.2009 12:00</div>
<div class="cell" style="left:174px;top:474px;width:48px;height:21px;line-height:18px"></div>
<div class="cell t" style="left:222px;top:474px;width:77px;height:21px;line-height:18px"></div>
<div class="cell ls" style="left:299px;top:474px;width:139px;height:21px;line-height:18px">14.10.2009 00:00</div>
<div class="cell t" style="left:438px;top:474px;width:313px;height:21px;line-height:18px">Alle 7 Tage 10.000 Teile</div>
<div class="cell r ls" style="left:751px;top:474px;width:63px;height:21px;line-height:18px">10.000,00</div>
<div class="cell r ls" style="left:814px;top:474px;width:81px;height:21px;line-height:18px">116.000,00</div>
<div class="cell r g ls" style="left:895px;top:474px;width:69px;height:21px;line-height:18px">30.000,00</div>
<div class="cell t1 ls" style="left:964px;top:474px;width:118px;height:21px;line-height:18px">14.10.</div>
<div class="rs" style="left:39px;top:495px;width:19px;height:21px"></div>
<div class="cell t1 ls" style="left:58px;top:495px;width:116px;height:21px;line-height:18px">28.12.2009 12:00</div>
<div class="cell" style="left:174px;top:495px;width:48px;height:21px;line-height:18px"></div>
<div class="cell t" style="left:222px;top:495px;width:77px;height:21px;line-height:18px"></div>
<div class="cell ls" style="left:299px;top:495px;width:139px;height:21px;line-height:18px">14.10.2009 00:00</div>
<div class="cell t" style="left:438px;top:495px;width:313px;height:21px;line-height:18px">Alle 7 Tage 10.000 Teile</div>
<div class="cell r ls" style="left:751px;top:495px;width:63px;height:21px;line-height:18px">10.000,00</div>
<div class="cell r ls" style="left:814px;top:495px;width:81px;height:21px;line-height:18px">126.000,00</div>
<div class="cell r g ls" style="left:895px;top:495px;width:69px;height:21px;line-height:18px">20.000,00</div>
<div class="cell t1 ls" style="left:964px;top:495px;width:118px;height:21px;line-height:18px">14.10.</div>
<div class="rs" style="left:39px;top:516px;width:19px;height:21px"></div>
<div class="cell t1 ls" style="left:58px;top:516px;width:116px;height:21px;line-height:18px">04.01.2010 12:00</div>
<div class="cell" style="left:174px;top:516px;width:48px;height:21px;line-height:18px"></div>
<div class="cell t" style="left:222px;top:516px;width:77px;height:21px;line-height:18px"></div>
<div class="cell ls" style="left:299px;top:516px;width:139px;height:21px;line-height:18px">14.10.2009 00:00</div>
<div class="cell t" style="left:438px;top:516px;width:313px;height:21px;line-height:18px">Alle 7 Tage 10.000 Teile</div>
<div class="cell r ls" style="left:751px;top:516px;width:63px;height:21px;line-height:18px">10.000,00</div>
<div class="cell r ls" style="left:814px;top:516px;width:81px;height:21px;line-height:18px">136.000,00</div>
<div class="cell r g ls" style="left:895px;top:516px;width:69px;height:21px;line-height:18px">10.000,00</div>
<div class="cell t1 ls" style="left:964px;top:516px;width:118px;height:21px;line-height:18px">14.10.</div>
<div class="rs" style="left:39px;top:537px;width:19px;height:21px"></div>
<div class="cell t1 ls" style="left:58px;top:537px;width:116px;height:21px;line-height:18px">11.01.2010 12:00</div>
<div class="cell" style="left:174px;top:537px;width:48px;height:21px;line-height:18px"></div>
<div class="cell t" style="left:222px;top:537px;width:77px;height:21px;line-height:18px"></div>
<div class="cell ls" style="left:299px;top:537px;width:139px;height:21px;line-height:18px">14.10.2009 00:00</div>
<div class="cell t" style="left:438px;top:537px;width:313px;height:21px;line-height:18px">Alle 7 Tage 10.000 Teile</div>
<div class="cell r ls" style="left:751px;top:537px;width:63px;height:21px;line-height:18px">10.000,00</div>
<div class="cell r ls" style="left:814px;top:537px;width:81px;height:21px;line-height:18px">146.000,00</div>
<div class="cell r g ls" style="left:895px;top:537px;width:69px;height:21px;line-height:18px">0,00</div>
<div class="cell t1 ls" style="left:964px;top:537px;width:118px;height:21px;line-height:18px">14.10.</div>
<div class="rs" style="left:39px;top:558px;width:19px;height:21px"></div>
<div class="cell t1 ls" style="left:58px;top:558px;width:116px;height:21px;line-height:18px">12.01.2010 00:00</div>
<div class="cell" style="left:174px;top:558px;width:48px;height:21px;line-height:18px"></div>
<div class="cell t" style="left:222px;top:558px;width:77px;height:21px;line-height:18px"></div>
<div class="cell ls" style="left:299px;top:558px;width:139px;height:21px;line-height:18px">14.10.2009 15:50</div>
<div class="cell t" style="left:438px;top:558px;width:313px;height:21px;line-height:18px">Wartungsvorschlag</div>
<div class="cell r ls" style="left:751px;top:558px;width:63px;height:21px;line-height:18px">0,00</div>
<div class="cell r ls" style="left:814px;top:558px;width:81px;height:21px;line-height:18px">0,00</div>
<div class="cell r g ls" style="left:895px;top:558px;width:69px;height:21px;line-height:18px">50.000,00</div>
<div class="cell t1 ls" style="left:964px;top:558px;width:118px;height:21px;line-height:18px">14.10.</div>
<div class="rs" style="left:39px;top:579px;width:19px;height:21px"></div>
<div class="cell t1 ls" style="left:58px;top:579px;width:116px;height:21px;line-height:18px">18.01.2010 12:00</div>
<div class="cell" style="left:174px;top:579px;width:48px;height:21px;line-height:18px"></div>
<div class="cell t" style="left:222px;top:579px;width:77px;height:21px;line-height:18px"></div>
<div class="cell ls" style="left:299px;top:579px;width:139px;height:21px;line-height:18px">14.10.2009 00:00</div>
<div class="cell t" style="left:438px;top:579px;width:313px;height:21px;line-height:18px">Alle 7 Tage 10.000 Teile</div>
<div class="cell r ls" style="left:751px;top:579px;width:63px;height:21px;line-height:18px">10.000,00</div>
<div class="cell r ls" style="left:814px;top:579px;width:81px;height:21px;line-height:18px">156.000,00</div>
<div class="cell r g ls" style="left:895px;top:579px;width:69px;height:21px;line-height:18px">40.000,00</div>
<div class="cell t1 ls" style="left:964px;top:579px;width:118px;height:21px;line-height:18px">14.10.</div>
<div class="rs" style="left:39px;top:600px;width:19px;height:21px"></div>
<div class="cell t1 ls" style="left:58px;top:600px;width:116px;height:21px;line-height:18px">25.01.2010 12:00</div>
<div class="cell" style="left:174px;top:600px;width:48px;height:21px;line-height:18px"></div>
<div class="cell t" style="left:222px;top:600px;width:77px;height:21px;line-height:18px"></div>
<div class="cell ls" style="left:299px;top:600px;width:139px;height:21px;line-height:18px">14.10.2009 00:00</div>
<div class="cell t" style="left:438px;top:600px;width:313px;height:21px;line-height:18px">Alle 7 Tage 10.000 Teile</div>
<div class="cell r ls" style="left:751px;top:600px;width:63px;height:21px;line-height:18px">10.000,00</div>
<div class="cell r ls" style="left:814px;top:600px;width:81px;height:21px;line-height:18px">166.000,00</div>
<div class="cell r g ls" style="left:895px;top:600px;width:69px;height:21px;line-height:18px">30.000,00</div>
<div class="cell t1 ls" style="left:964px;top:600px;width:118px;height:21px;line-height:18px">14.10.</div>
<div class="rs" style="left:39px;top:621px;width:19px;height:21px"></div>
<div class="cell t1 ls" style="left:58px;top:621px;width:116px;height:21px;line-height:18px">01.02.2010 12:00</div>
<div class="cell" style="left:174px;top:621px;width:48px;height:21px;line-height:18px"></div>
<div class="cell t" style="left:222px;top:621px;width:77px;height:21px;line-height:18px"></div>
<div class="cell ls" style="left:299px;top:621px;width:139px;height:21px;line-height:18px">14.10.2009 00:00</div>
<div class="cell t" style="left:438px;top:621px;width:313px;height:21px;line-height:18px">Alle 7 Tage 10.000 Teile</div>
<div class="cell r ls" style="left:751px;top:621px;width:63px;height:21px;line-height:18px">10.000,00</div>
<div class="cell r ls" style="left:814px;top:621px;width:81px;height:21px;line-height:18px">176.000,00</div>
<div class="cell r g ls" style="left:895px;top:621px;width:69px;height:21px;line-height:18px">20.000,00</div>
<div class="cell t1 ls" style="left:964px;top:621px;width:118px;height:21px;line-height:18px">14.10.</div>
<div class="rs" style="left:39px;top:642px;width:19px;height:21px"></div>
<div class="cell t1 ls" style="left:58px;top:642px;width:116px;height:21px;line-height:18px">08.02.2010 12:00</div>
<div class="cell" style="left:174px;top:642px;width:48px;height:21px;line-height:18px"></div>
<div class="cell t" style="left:222px;top:642px;width:77px;height:21px;line-height:18px"></div>
<div class="cell ls" style="left:299px;top:642px;width:139px;height:21px;line-height:18px">14.10.2009 00:00</div>
<div class="cell t" style="left:438px;top:642px;width:313px;height:21px;line-height:18px">Alle 7 Tage 10.000 Teile</div>
<div class="cell r ls" style="left:751px;top:642px;width:63px;height:21px;line-height:18px">10.000,00</div>
<div class="cell r ls" style="left:814px;top:642px;width:81px;height:21px;line-height:18px">186.000,00</div>
<div class="cell r g ls" style="left:895px;top:642px;width:69px;height:21px;line-height:18px">10.000,00</div>
<div class="cell t1 ls" style="left:964px;top:642px;width:118px;height:21px;line-height:18px">14.10.</div>
<div class="rs" style="left:39px;top:663px;width:19px;height:21px"></div>
<div class="cell t1 ls" style="left:58px;top:663px;width:116px;height:21px;line-height:18px">15.02.2010 12:00</div>
<div class="cell" style="left:174px;top:663px;width:48px;height:21px;line-height:18px"></div>
<div class="cell t" style="left:222px;top:663px;width:77px;height:21px;line-height:18px"></div>
<div class="cell ls" style="left:299px;top:663px;width:139px;height:21px;line-height:18px">14.10.2009 00:00</div>
<div class="cell t" style="left:438px;top:663px;width:313px;height:21px;line-height:18px">Alle 7 Tage 10.000 Teile</div>
<div class="cell r ls" style="left:751px;top:663px;width:63px;height:21px;line-height:18px">10.000,00</div>
<div class="cell r ls" style="left:814px;top:663px;width:81px;height:21px;line-height:18px">196.000,00</div>
<div class="cell r g ls" style="left:895px;top:663px;width:69px;height:21px;line-height:18px">0,00</div>
<div class="cell t1 ls" style="left:964px;top:663px;width:118px;height:21px;line-height:18px">14.10.</div>
<div class="rs" style="left:39px;top:684px;width:19px;height:21px"></div>
<div class="cell t1 ls" style="left:58px;top:684px;width:116px;height:21px;line-height:18px">16.02.2010 00:00</div>
<div class="cell" style="left:174px;top:684px;width:48px;height:21px;line-height:18px"></div>
<div class="cell t" style="left:222px;top:684px;width:77px;height:21px;line-height:18px"></div>
<div class="cell ls" style="left:299px;top:684px;width:139px;height:21px;line-height:18px">14.10.2009 15:50</div>
<div class="cell t" style="left:438px;top:684px;width:313px;height:21px;line-height:18px">Wartungsvorschlag</div>
<div class="cell r ls" style="left:751px;top:684px;width:63px;height:21px;line-height:18px">0,00</div>
<div class="cell r ls" style="left:814px;top:684px;width:81px;height:21px;line-height:18px">0,00</div>
<div class="cell r g ls" style="left:895px;top:684px;width:69px;height:21px;line-height:18px">50.000,00</div>
<div class="cell t1 ls" style="left:964px;top:684px;width:118px;height:21px;line-height:18px">14.10.</div>
<div class="abs" style="left:0;top:0;width:1016px;height:1px;background:#a8b4d0"></div>
<div class="dotv" style="left:10px;top:31px;height:151px"></div>
<div class="doth" style="left:11px;top:31px;width:9px"></div>
<div class="doth" style="left:11px;top:52px;width:9px"></div>
<div class="doth" style="left:15px;top:73px;width:5px"></div>
<div class="doth" style="left:15px;top:186px;width:5px"></div>
<div class="pm" style="left:6px;top:69px"><i></i></div>
<div class="pm" style="left:6px;top:182px"><i></i></div>
<div class="dotv" style="left:29px;top:85px;height:56px"></div>
<div class="doth" style="left:30px;top:119px;width:10px"></div>
<div class="doth" style="left:30px;top:140px;width:10px"></div>
<div class="dotv" style="left:29px;top:197px;height:494px"></div>
<div class="doth" style="left:30px;top:232px;width:10px"></div>
<div class="doth" style="left:30px;top:253px;width:10px"></div>
<div class="doth" style="left:30px;top:274px;width:10px"></div>
<div class="doth" style="left:30px;top:295px;width:10px"></div>
<div class="doth" style="left:30px;top:316px;width:10px"></div>
<div class="doth" style="left:30px;top:337px;width:10px"></div>
<div class="doth" style="left:30px;top:358px;width:10px"></div>
<div class="doth" style="left:30px;top:379px;width:10px"></div>
<div class="doth" style="left:30px;top:400px;width:10px"></div>
<div class="doth" style="left:30px;top:421px;width:10px"></div>
<div class="doth" style="left:30px;top:442px;width:10px"></div>
<div class="doth" style="left:30px;top:463px;width:10px"></div>
<div class="doth" style="left:30px;top:484px;width:10px"></div>
<div class="doth" style="left:30px;top:505px;width:10px"></div>
<div class="doth" style="left:30px;top:526px;width:10px"></div>
<div class="doth" style="left:30px;top:547px;width:10px"></div>
<div class="doth" style="left:30px;top:568px;width:10px"></div>
<div class="doth" style="left:30px;top:589px;width:10px"></div>
<div class="doth" style="left:30px;top:610px;width:10px"></div>
<div class="doth" style="left:30px;top:631px;width:10px"></div>
<div class="doth" style="left:30px;top:652px;width:10px"></div>
<div class="doth" style="left:30px;top:673px;width:10px"></div>
</div>
<div class="abs" style="left:998px;top:28px;width:18px;height:691px;background:linear-gradient(to right,#fff 0,#f8f8f6 25%,#f6f2e6 45%,#f1ecfb 60%,#e6f6ee 78%,#d5e8fb 100%)"></div>
<div class="abs" style="left:998px;top:29px;width:16px;height:4px;border:1px solid #c9ccd4;background:#fff"></div>
<svg class="abs" style="left:1003px;top:42px" width="8" height="4" viewBox="0 0 8 4"><path d="M0 4L4 0L8 4Z" fill="#3d4658"/></svg>
<div class="abs" style="left:999px;top:52px;width:15px;height:135px;border:1px solid #5d6c86;background:linear-gradient(to right,#eef0f9 0,#d9e0ee 30%,#b9cfd2 50%,#d7c6de 70%,#c4d2ea 100%)"></div>
<div class="abs" style="left:1003px;top:114px;width:7px;height:1px;background:#6b7688;box-shadow:0 2px 0 #6b7688,0 4px 0 #6b7688,0 6px 0 #6b7688"></div>
<svg class="abs" style="left:1002px;top:708px" width="8" height="4" viewBox="0 0 8 4"><path d="M0 0L4 4L8 0Z" fill="#3d4658"/></svg>
<div class="abs" style="left:0;top:719px;width:1016px;height:18px;background:linear-gradient(to bottom,#fff 0,#faf8f4 40%,#f4f1f6 70%,#e2f0fc 90%,#bfe0fb 100%)"></div>
<svg class="abs" style="left:13px;top:724px" width="4" height="7" viewBox="0 0 4 7"><path d="M4 0L0 3.500L4 7Z" fill="#3d4658"/></svg>
<div class="abs" style="left:24px;top:720px;width:761px;height:15px;border:1px solid #5a6276;border-right-color:#8a90a0;background:linear-gradient(to bottom,#ecebf3 0,#d4d9e3 25%,#a9b9c8 55%,#c2c8d3 80%,#d8d7de 100%)"></div>
<div class="abs" style="left:400px;top:723px;width:1px;height:8px;background:#5d6678;box-shadow:2px 0 0 #5d6678,4px 0 0 #5d6678,6px 0 0 #5d6678"></div>
<svg class="abs" style="left:987px;top:724px" width="4" height="7" viewBox="0 0 4 7"><path d="M0 0L4 3.500L0 7Z" fill="#3d4658"/></svg>
</div>
<div class="abs" id="botb"></div>
</div>
</body></html>
